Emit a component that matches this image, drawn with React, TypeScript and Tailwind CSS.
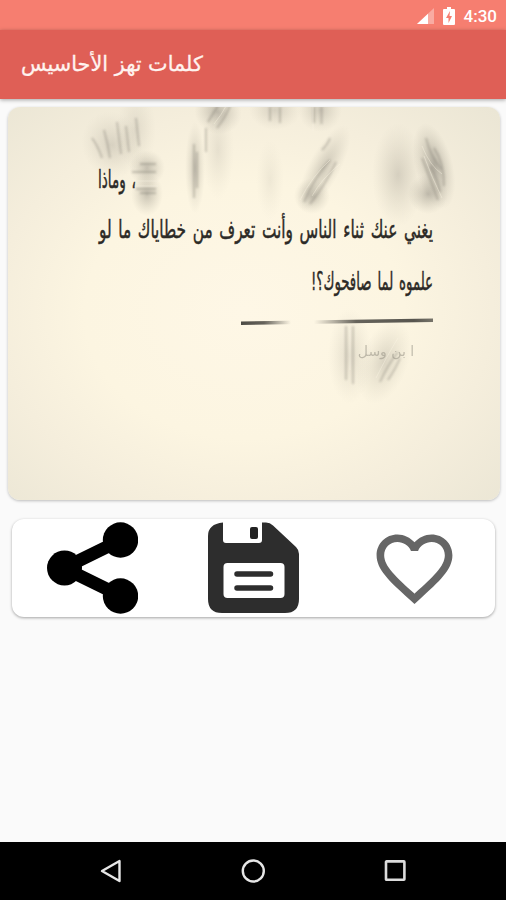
import React from 'react';

const lines = [
  { text: '، وماذا', x: 117, y: 188, width: 38 },
  { text: 'يغني عنك ثناء الناس وأنت تعرف من خطاياك ما لو', x: 266, y: 238, width: 334 },
  { text: 'علموه لما صافحوك؟!', x: 372, y: 290, width: 122 }
];

const smudges = [
  { x: 112, y: 145, rx: 30, ry: 34, rotate: -20, opacity: 0.24 },
  { x: 136, y: 130, rx: 20, ry: 40, rotate: 0, opacity: 0.16 },
  { x: 147, y: 168, rx: 18, ry: 18, rotate: 0, opacity: 0.4 },
  { x: 147, y: 194, rx: 16, ry: 22, rotate: 0, opacity: 0.4 },
  { x: 195, y: 168, rx: 10, ry: 46, rotate: 0, opacity: 0.34 },
  { x: 218, y: 150, rx: 16, ry: 50, rotate: 0, opacity: 0.14 },
  { x: 218, y: 112, rx: 24, ry: 22, rotate: 25, opacity: 0.42 },
  { x: 275, y: 110, rx: 26, ry: 20, rotate: 0, opacity: 0.25 },
  { x: 320, y: 110, rx: 22, ry: 22, rotate: 0, opacity: 0.3 },
  { x: 270, y: 180, rx: 14, ry: 40, rotate: 0, opacity: 0.1 },
  { x: 324, y: 168, rx: 16, ry: 48, rotate: 28, opacity: 0.34 },
  { x: 312, y: 196, rx: 18, ry: 18, rotate: 28, opacity: 0.4 },
  { x: 398, y: 175, rx: 26, ry: 52, rotate: 0, opacity: 0.26 },
  { x: 434, y: 166, rx: 19, ry: 44, rotate: -14, opacity: 0.55 },
  { x: 428, y: 194, rx: 20, ry: 20, rotate: 0, opacity: 0.42 },
  { x: 350, y: 356, rx: 22, ry: 48, rotate: 0, opacity: 0.2 },
  { x: 384, y: 362, rx: 24, ry: 44, rotate: 20, opacity: 0.26 }
];

const darkStrokes = [
  'M92 138q6 8 10 20M104 130q4 14 6 28M117 122l4 32M136 118l3 28M126 126l3 26',
  'M132 172h24M136 189h20M140 164h16M140 193h16',
  'M194 144v54M197 152v36M206 128v24',
  'M208 122q6 -10 10 -16M217 128q8 -10 13 -22',
  'M270 107v14M280 107v16',
  'M314 107v16M321.5 107v17',
  'M304 202q10 -24 26 -42M310 204q16 -20 26 -42M322 150q6 -6 8 -12',
  'M426 138q4 18 16 32M434 148q10 14 10 38M422 158q8 20 16 42M430 166q8 14 10 26',
  'M346 326v54M353 326v58M380 382q8 -18 18 -30M388 380q8 -12 12 -22'
];

const lightStrokes = [
  'M214 124q8 -10 12 -18M313 107v24M134 181h26M134 186h24',
  'M300 200q12 -24 30 -40M312 196q10 -18 28 -32',
  'M422 146q8 20 20 28M424 156q8 22 18 42M376 378q12 -24 22 -40M350 330v40'
];

const QuotePicture = () => (
  <svg viewBox="8 107 492 393" className="block h-[393px] w-[492px]">
    <defs>
      <radialGradient id="paper" cx="0.48" cy="0.52" r="0.72">
        <stop offset="0" stopColor="#fef7e6" />
        <stop offset="0.45" stopColor="#fcf5e1" />
        <stop offset="0.7" stopColor="#f5eedc" />
        <stop offset="1" stopColor="#ebe6d5" />
      </radialGradient>
      <radialGradient id="smudge">
        <stop offset="0" stopColor="#77736a" />
        <stop offset="0.5" stopColor="#8b877a" stopOpacity="0.5" />
        <stop offset="1" stopColor="#a8a496" stopOpacity="0" />
      </radialGradient>
      <linearGradient id="rule">
        <stop offset="0" stopColor="#4d4b45" />
        <stop offset="0.12" stopColor="#66635b" />
        <stop offset="0.26" stopColor="#66635b" stopOpacity="0" />
        <stop offset="0.38" stopColor="#66635b" stopOpacity="0" />
        <stop offset="0.6" stopColor="#66635b" />
        <stop offset="0.9" stopColor="#57554e" />
        <stop offset="1" stopColor="#77746a" />
      </linearGradient>
      <filter id="soft" x="-20%" y="-20%" width="140%" height="140%">
        <feGaussianBlur stdDeviation="1.1" />
      </filter>
    </defs>
    <rect x="8" y="107" width="492" height="393" fill="url(#paper)" />
    {smudges.map((s, index) => (
      <ellipse
        key={index}
        cx={s.x}
        cy={s.y}
        rx={s.rx}
        ry={s.ry}
        opacity={s.opacity}
        fill="url(#smudge)"
        transform={`rotate(${s.rotate} ${s.x} ${s.y})`}
      />
    ))}
    <g filter="url(#soft)" fill="none" stroke="#69665e" strokeWidth="1.8" opacity="0.32">
      {darkStrokes.map((d) => (
        <path key={d} d={d} />
      ))}
    </g>
    <g fill="none" stroke="#fdf7e6" strokeWidth="1" opacity="0.4">
      {lightStrokes.map((d) => (
        <path key={d} d={d} />
      ))}
    </g>
    {lines.map((line) => (
      <text
        key={line.y}
        x={line.x}
        y={line.y}
        textAnchor="middle"
        textLength={line.width}
        lengthAdjust="spacingAndGlyphs"
        direction="rtl"
        fill="#2c2a26"
        stroke="#2c2a26"
        strokeWidth="0.5"
        className="font-['DejaVu_Sans',sans-serif] text-[25px] [word-spacing:3px]"
      >
        {line.text}
      </text>
    ))}
    <path d="M241 321.5L433 318.5V322L241 325Z" fill="url(#rule)" />
    <text
      x="386"
      y="356"
      textAnchor="middle"
      direction="rtl"
      fill="#8d897d"
      opacity="0.5"
      className="font-['DejaVu_Sans',sans-serif] text-[14px]"
    >
      ا بن وسل
    </text>
  </svg>
);

const ShareIcon = () => (
  <svg viewBox="0 0 91 92" className="h-[92px] w-[91px]">
    <path d="M74 18L17 46L74 74" fill="none" stroke="#000" strokeWidth="13" />
    <circle cx="17.5" cy="46" r="17.5" />
    <circle cx="73.5" cy="18" r="17.7" />
    <circle cx="73.5" cy="74" r="17.7" />
  </svg>
);

const SaveIcon = () => (
  <svg viewBox="0 0 91 92" className="h-[92px] w-[91px]">
    <path
      d="M15 .5V18q0 3 3 3H51q3 0 3-3V.5H58q4 0 7 3L88 25q3 3 3 7V77q0 14-14 14H14Q0 91 0 77V14Q0 2 15 .5Z"
      fill="#2d2d2d"
    />
    <rect x="42" y="5" width="8" height="12" rx="2" fill="#222" />
    <rect x="15.5" y="41" width="61" height="35" rx="4" fill="#fff" />
    <path d="M29 52H62.5M29 66H62.5" stroke="#2d2d2d" strokeWidth="5.5" strokeLinecap="round" />
  </svg>
);

const HeartIcon = () => (
  <svg viewBox="0 0 24 24" className="h-[91px] w-[91px]" fill="#666">
    <path d="M16.5 3c-1.74 0-3.41.81-4.5 2.09C10.91 3.81 9.24 3 7.5 3 4.42 3 2 5.42 2 8.5c0 3.78 3.4 6.86 8.55 11.54L12 21.35l1.45-1.32C18.6 15.36 22 12.28 22 8.5 22 5.42 19.58 3 16.5 3zm-4.4 15.55l-.1.1-.1-.1C7.14 14.24 4 11.39 4 8.5 4 6.5 5.5 5 7.5 5c1.54 0 3.04.99 3.57 2.36h1.87C13.46 5.99 14.96 5 16.5 5c2 0 3.5 1.5 3.5 3.5 0 2.89-3.14 5.74-7.9 10.05z" />
  </svg>
);

const StatusBar = () => (
  <div className="flex h-[30px] items-center justify-end bg-[#f67e70] pr-[9px] pt-[2px] text-white">
    <svg viewBox="0 0 17 16" className="mr-[9px] h-4 w-[17px]" fill="#fff">
      <path d="M17 0V16H0Z" opacity="0.35" />
      <path d="M11 5.7V16H0Z" />
    </svg>
    <svg viewBox="0 0 12 18" className="mr-[9px] h-[18px] w-3">
      <path d="M4 0H8V2H11Q12 2 12 3V17Q12 18 11 18H1Q0 18 0 17V3Q0 2 1 2H4Z" fill="#fff" />
      <path d="M7 4L3 11H5.5V16L9 9H6.5Z" fill="#f67e70" />
    </svg>
    <span className="font-['Roboto',sans-serif] text-[17px] leading-none font-medium">4:30</span>
  </div>
);

const NavBar = () => (
  <nav className="flex h-[58px] items-center justify-center gap-[118px] bg-black">
    <svg viewBox="0 0 24 24" className="h-6 w-6" fill="none" stroke="#e6e6e6" strokeWidth="2.4">
      <path d="M20.5 2V22L3 12Z" strokeLinejoin="round" />
    </svg>
    <svg viewBox="0 0 24 24" className="h-6 w-6" fill="none" stroke="#e6e6e6" strokeWidth="2.4">
      <circle cx="12.3" cy="12" r="10.5" />
    </svg>
    <svg viewBox="0 0 24 24" className="h-6 w-6" fill="none" stroke="#dcdcdc" strokeWidth="2.6">
      <rect x="3" y="2.4" width="18.4" height="18.4" rx="0.5" />
    </svg>
  </nav>
);

const App = () => {
  return (
    <div className="flex h-[900px] w-[506px] flex-col overflow-hidden bg-[#fafafa]">
      <StatusBar />
      <header className="z-10 flex h-[69px] items-center bg-[#df5f56] pl-[21px] shadow-[0_1px_4px_rgba(0,0,0,0.35)]">
        <h1
          dir="rtl"
          className="font-['DejaVu_Sans',sans-serif] text-[20.8px] whitespace-nowrap text-[#fff3ef] [-webkit-text-stroke:0.3px_#fff3ef]"
        >
          كلمات تهز الأحاسيس
        </h1>
      </header>
      <main className="flex flex-1 flex-col pt-2">
        <div className="ml-2 w-[492px] overflow-hidden rounded-[12px] shadow-[0_1px_3px_rgba(0,0,0,0.25)]">
          <QuotePicture />
        </div>
        <div className="mt-[19px] ml-3 grid h-[98px] w-[483px] grid-cols-3 place-items-center rounded-[12px] bg-white shadow-[0_1px_3px_rgba(0,0,0,0.35)]">
          <ShareIcon />
          <SaveIcon />
          <HeartIcon />
        </div>
      </main>
      <NavBar />
    </div>
  );
};

export default App;
